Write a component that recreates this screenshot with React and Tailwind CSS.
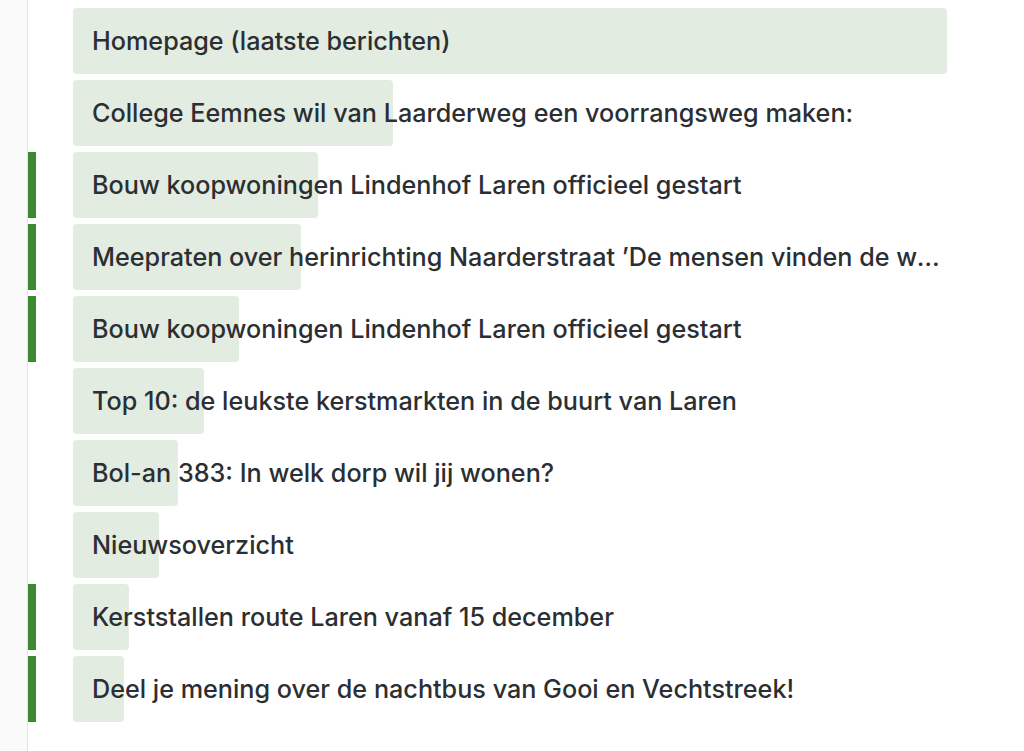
import React from "react";

const rows = [
  { t: "Homepage (laatste berichten)", w: 874, m: false },
  { t: "College Eemnes wil van Laarderweg een voorrangsweg maken:", w: 320, m: false },
  { t: "Bouw koopwoningen Lindenhof Laren officieel gestart", w: 245, m: true },
  { t: "Meepraten over herinrichting Naarderstraat \u2019De mensen vinden de weg niet veilig genoeg\u2019", w: 228, m: true },
  { t: "Bouw koopwoningen Lindenhof Laren officieel gestart", w: 166, m: true },
  { t: "Top 10: de leukste kerstmarkten in de buurt van Laren", w: 131, m: false },
  { t: "Bol-an 383: In welk dorp wil jij wonen?", w: 105, m: false },
  { t: "Nieuwsoverzicht", w: 86, m: false },
  { t: "Kerststallen route Laren vanaf 15 december", w: 56, m: true },
  { t: "Deel je mening over de nachtbus van Gooi en Vechtstreek!", w: 51, m: true },
];

export default function App() {
  return (
    <div className="flex w-[1024px] h-[751px] bg-white overflow-hidden" style={{ fontFamily: "Inter, 'Liberation Sans', sans-serif" }}>
      <div className="w-[28px] shrink-0 bg-[#fafafa] border-r border-[#e3e3e3]" />
      <div className="flex flex-col gap-[6px] pt-[8px]">
        {rows.map((r, i) => (
          <div key={i} className="flex h-[66px]">
            <div className={`w-[8px] shrink-0 ${r.m ? "bg-[#3b8a2f]" : ""}`} />
            <div className="w-[37px] shrink-0" />
            <div className="relative w-[874px] flex items-center">
              <div className="absolute left-0 top-0 bottom-0 rounded-[4px] bg-[#e2ece0]" style={{ width: r.w }} />
              <span className="relative pl-[19px] pt-[1px] truncate text-[25.2px] font-medium text-[#2b2f33]">{r.t}</span>
            </div>
          </div>
        ))}
      </div>
    </div>
  );
}
